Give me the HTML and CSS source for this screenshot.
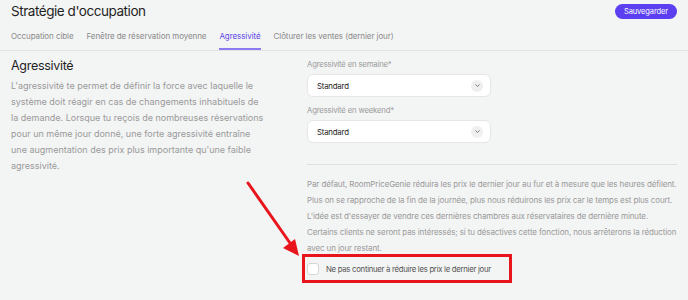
FILE: index.html
```html
<!DOCTYPE html>
<html lang="fr">
<head>
<meta charset="utf-8">
<link rel="stylesheet" href="styles.css">
</head>
<body>
<div class="page">
  <header class="header">
    <h1 class="title">Stratégie d'occupation</h1>
    <button class="save">Sauvegarder</button>
  </header>
  <nav class="tabs">
    <span class="tab">Occupation cible</span>
    <span class="tab">Fenêtre de réservation moyenne</span>
    <span class="tab active">Agressivité</span>
    <span class="tab">Clôturer les ventes (dernier jour)</span>
  </nav>
  <main class="content">
    <section class="left">
      <h2 class="heading">Agressivité</h2>
      <p class="desc">L'agressivité te permet de définir la force avec laquelle le système doit réagir en cas de changements inhabituels de la demande. Lorsque tu reçois de nombreuses réservations pour un même jour donné, une forte agressivité entraîne une augmentation des prix plus importante qu'une faible agressivité.</p>
    </section>
    <section class="right">
      <label class="field-label">Agressivité en semaine*</label>
      <div class="select"><span>Standard</span><span class="chev"><svg width="5" height="3" viewBox="0 0 5 3"><path d="M0.5 0.5 L2.5 2.5 L4.5 0.5" fill="none" stroke="#666" stroke-width="0.9"/></svg></span></div>
      <label class="field-label">Agressivité en weekend*</label>
      <div class="select"><span>Standard</span><span class="chev"><svg width="5" height="3" viewBox="0 0 5 3"><path d="M0.5 0.5 L2.5 2.5 L4.5 0.5" fill="none" stroke="#666" stroke-width="0.9"/></svg></span></div>
      <hr class="divider">
      <p class="info">Par défaut, RoomPriceGenie réduira les prix le dernier jour au fur et à mesure que les heures défilent. Plus on se rapproche de la fin de la journée, plus nous réduirons les prix car le temps est plus court. L'idée est d'essayer de vendre ces dernières chambres aux réservataires de dernière minute.<br>Certains clients ne seront pas intéressés; si tu désactives cette fonction, nous arrêterons la réduction avec un jour restant.</p>
      <div class="check-row">
        <span class="box"></span>
        <span class="check-label">Ne pas continuer à réduire les prix le dernier jour</span>
      </div>
    </section>
  </main>
  <svg class="arrow" width="688" height="300" viewBox="0 0 688 300">
    <line x1="248" y1="183" x2="290" y2="243" stroke="#e8161c" stroke-width="3" stroke-linecap="round"/>
    <polygon points="299,256 283,248 295,239" fill="#e8161c"/>
  </svg>
</div>
</body>
</html>
```
FILE: styles.css
```css
* { box-sizing: border-box; }
html, body { margin: 0; padding: 0; }
body {
  background: #f3f4f4;
  font-family: Inter, "Noto Sans", sans-serif;
  width: 688px;
  height: 300px;
  overflow: hidden;
}
.page { position: relative; height: 300px; }
.header {
  display: flex;
  justify-content: space-between;
  align-items: center;
  padding: 2px 11px 0 11px;
  height: 20px;
}
.title {
  margin: 0;
  font-size: 13.5px;
  font-weight: 400;
  color: #1f1f1f;
  letter-spacing: -0.45px;
}
.save {
  background: #5b3ff0;
  color: #fff;
  border: none;
  border-radius: 8px;
  font-family: inherit;
  font-size: 7.5px;
  letter-spacing: -0.1px;
  height: 15px;
  width: 62px;
  padding: 0;
}
.tabs {
  display: flex;
  gap: 13px;
  padding: 9px 11px 0;
  border-bottom: 1px solid #e2e3e3;
  height: 31px;
}
.tab {
  font-size: 8px;
  letter-spacing: -0.08px;
  color: #8a8a8a;
  height: 21px;
  padding-top: 2px;
  border-bottom: 2px solid transparent;
}
.tab.active {
  color: #5b44e6;
  border-bottom-color: #8b7bf2;
}
.content {
  display: grid;
  grid-template-columns: 296px 1fr;
  padding: 0 11px;
}
.heading {
  margin: 7px 0 0;
  font-size: 12.5px;
  letter-spacing: -0.3px;
  font-weight: 400;
  color: #1f1f1f;
  line-height: 16px;
}
.desc {
  margin: 4px 0 0;
  font-size: 9px;
  line-height: 16px;
  color: #9a9a9a;
  width: 255px;
}
.right { display: flex; flex-direction: column; }
.field-label {
  font-size: 7.7px;
  letter-spacing: -0.15px;
  color: #9a9a9a;
  margin-top: 9px;
  height: 14px;
}
.select {
  width: 184px;
  height: 23px;
  background: #fff;
  border: 1px solid #e6e6e6;
  border-radius: 6px;
  display: flex;
  justify-content: space-between;
  align-items: center;
  padding: 0 7px 0 9px;
  font-size: 7.8px;
  letter-spacing: -0.2px;
  color: #222;
}
.chev {
  width: 12px; height: 12px;
  border-radius: 50%;
  background: #efefef;
  display: flex; align-items: center; justify-content: center;
}
.divider {
  border: none;
  border-top: 1px solid #e0e0e0;
  margin: 21px 0 0;
  width: 370px;
}
.info {
  margin: 11px 0 0;
  font-size: 8px;
  letter-spacing: -0.12px;
  line-height: 16px;
  color: #9a9a9a;
  width: 372px;
}
.check-row {
  display: flex;
  align-items: center;
  gap: 7px;
  margin: -2px 0 0 -5px;
  width: 210px;
  height: 29px;
  border: 3px solid #e8161c;
  padding-left: 2px;
}
.box {
  width: 12px; height: 12px;
  border: 1px solid #d6d6d6;
  border-radius: 3px;
  background: #fff;
}
.check-label {
  font-size: 7.8px;
  letter-spacing: -0.3px;
  color: #555;
}
.arrow { position: absolute; left: 0; top: 0; pointer-events: none; }
```
